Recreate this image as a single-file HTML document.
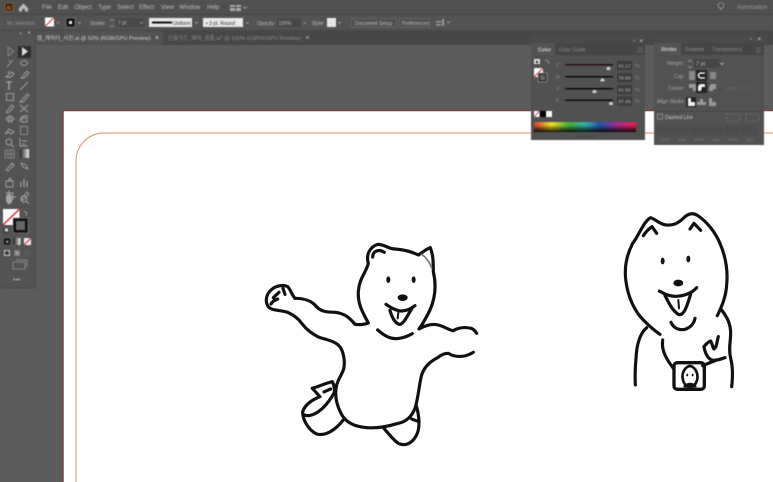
<!DOCTYPE html>
<html><head><meta charset="utf-8"><style>
html,body{margin:0;padding:0;background:#5c5c5c;width:773px;height:482px;overflow:hidden}
svg{display:block;position:absolute;left:0;top:0}
text{font-family:"Liberation Sans","Noto Sans CJK KR",sans-serif;font-size:6px;fill:#bdbdbd}
.ui{filter:blur(.45px)}
.d{fill:#999}
.f{fill:#8a8a8a;font-size:5px}
.art{filter:blur(.25px)}
.art path,.art ellipse{stroke-linecap:round;stroke-linejoin:round}
</style></head><body>
<svg width="773" height="482" viewBox="0 0 773 482" xmlns="http://www.w3.org/2000/svg">
<rect width="773" height="482" fill="#5c5c5c"/>
<!-- artboard -->
<rect x="63" y="110.5" width="720" height="380" fill="#fff" stroke="#7a4444" stroke-width="1.5"/>
<path d="M773 133H104a28 28 0 0 0-28 28V482" fill="none" stroke="#d98f6b" stroke-width="1"/>
<!-- bear 1 -->
<g class="art" transform="translate(255 235) scale(.3333)" fill="none" stroke="#111" stroke-width="9.500">
<path d="M120 190C140 190 165 195 180 210C195 230 215 232 240 232C270 235 285 250 300 268C315 270 330 268 340 264C325 235 308 210 310 170C312 130 335 110 340 85C332 60 345 35 368 28C390 28 400 42 420 42C450 44 470 50 490 60C505 50 515 42 526 38C535 60 535 85 535 110C542 140 545 180 525 225C515 245 505 265 492 282C510 272 530 265 550 270C570 275 580 285 595 287"/>
<path d="M595 287C610 278 630 276 648 280C658 283 662 290 665 295"/>
<path d="M120 190C110 180 108 165 98 155C85 148 62 152 48 165C34 178 30 198 38 212C45 228 75 224 98 232C115 240 130 250 140 265C155 285 170 295 190 306C215 315 245 318 258 340C268 360 270 385 266 402C260 420 250 432 245 450C238 480 245 510 258 535C270 560 295 575 335 578C370 580 395 575 430 565C455 560 470 545 480 520C490 490 492 450 500 420C510 390 530 378 548 368C560 358 570 355 580 355C600 368 630 368 655 352"/>
<path d="M385 578C400 595 415 615 430 625C450 635 470 625 482 605C495 585 495 555 485 515"/>
<path d="M470 552C478 555 485 558 492 560"/>
<path d="M172 460C190 455 210 445 232 440C240 455 240 470 235 478C222 500 205 520 190 530C175 540 160 545 148 540"/>
<path d="M172 460L195 485C170 495 150 510 143 530C143 555 160 585 185 597C215 605 245 580 265 555"/>
<path d="M207 471L227 462"/>
<path d="M55 188L72 172M48 207C52 200 60 195 68 192M84 160L90 178"/>
<path d="M353 66C353 50 370 40 388 52"/>
<path d="M500 58C512 66 522 78 530 98" stroke="#777" stroke-width="5"/>
<path d="M393 208C410 220 425 228 440 228C455 228 470 220 480 212"/>
<path d="M405 226C410 245 418 262 432 268C445 270 455 245 470 222"/>
<path d="M430 233L428 250" stroke-width="6"/>
<path d="M368 285C385 300 405 312 425 311C445 310 460 303 472 296"/>
<ellipse cx="400" cy="134" rx="6" ry="10" fill="#111" stroke="none"/>
<ellipse cx="476" cy="134" rx="6" ry="10" fill="#111" stroke="none"/>
<ellipse cx="443" cy="188" rx="15" ry="10" fill="#111" stroke="none"/>
</g>
<!-- bear 2 -->
<g class="art" transform="translate(610 205) scale(.3333)" fill="none" stroke="#111" stroke-width="9.500">
<path d="M150 388C130 375 115 360 100 345C75 320 55 280 48 230C42 190 50 150 68 115C85 95 100 50 122 38C140 45 150 58 168 60C190 62 205 55 222 38C235 25 250 22 265 33C290 50 315 80 330 115C345 150 355 190 350 240C348 275 335 305 322 332"/>
<path d="M335 315C350 335 362 355 362 385C362 410 355 430 362 460C370 490 368 520 365 545"/>
<path d="M110 368C90 385 80 420 78 460C75 490 75 515 76 540"/>
<path d="M100 92C108 80 118 70 126 65L140 85"/>
<path d="M240 72L252 55L272 76"/>
<path d="M148 258C165 268 180 275 200 274C225 272 245 265 260 248"/>
<path d="M165 272C175 290 185 315 205 328C222 335 232 300 242 268"/>
<path d="M205 285L207 310" stroke-width="6"/>
<path d="M183 352C190 370 210 378 228 372C245 365 252 355 255 340"/>
<path d="M158 405C155 430 160 450 190 490"/>
<path d="M278 482L320 465"/>
<path d="M282 425C290 415 295 410 302 408C308 418 308 430 312 432C322 425 320 410 325 395"/>
<path d="M282 425C285 445 295 465 310 466C325 466 335 462 345 458"/>
<rect x="192" y="473" width="91" height="80" rx="10" stroke-width="10"/>
<path d="M218 520C215 500 228 485 240 483C252 485 265 500 262 522C258 540 250 545 240 545C228 545 220 535 218 520Z" stroke-width="8"/>
<path d="M222 545C230 532 250 532 258 545Z" fill="#111" stroke-width="4"/>
<ellipse cx="232" cy="510" rx="3" ry="4" fill="#111" stroke="none"/><ellipse cx="248" cy="510" rx="3" ry="4" fill="#111" stroke="none"/>
<ellipse cx="158" cy="168" rx="6" ry="10" fill="#111" stroke="none"/>
<ellipse cx="235" cy="162" rx="6" ry="10" fill="#111" stroke="none"/>
<ellipse cx="205" cy="234" rx="15" ry="10" fill="#111" stroke="none"/>
</g>
<g class="ui">
<!-- top bars -->
<rect width="773" height="14.5" fill="#505050"/>
<rect y="14.5" width="773" height="16" fill="#535353"/>
<rect y="14" width="773" height=".7" fill="#404040"/>
<rect y="30" width="773" height="15" fill="#474747"/>
<rect x="0" y="31" width="163" height="14" fill="#525252"/>
<rect x="5" y="3" width="8" height="8" fill="#3a2412" stroke="#a8622a" stroke-width=".7"/>
<text x="6.500" y="9.500" style="font-size:5px;fill:#e08a30">Ai</text>
<path d="M19 8L23.500 3.500L28 8V11.500H25V9H22V11.500H19Z" fill="#bbb"/>
<text x="42" y="9">File</text><text x="58" y="9">Edit</text><text x="74.500" y="9">Object</text>
<text x="98" y="9">Type</text><text x="117" y="9">Select</text><text x="139" y="9">Effect</text>
<text x="161" y="9">View</text><text x="179" y="9">Window</text><text x="207" y="9">Help</text>
<path d="M230 5h5v2h-5zM236 5h5v2h-5zM230 8h5v3h-5zM236 8h5v3h-5z" fill="#aaa"/>
<path d="M243 6.500l2 2 2-2" fill="none" stroke="#aaa" stroke-width=".7"/>
<circle cx="721" cy="5.500" r="2.800" fill="none" stroke="#aaa" stroke-width=".7"/><path d="M720 9.500h2" stroke="#aaa" stroke-width=".8"/>
<text x="737" y="9" class="d">Automation</text>
<!-- options bar -->
<text x="7" y="25" class="d" style="font-size:5px">No Selection</text>
<rect x="45" y="17.500" width="9" height="9" fill="#fff"/><path d="M45 26.500L54 17.500" stroke="#d22" stroke-width="1"/>
<path d="M56.500 22l1.500 1.500 1.500-1.500M78 22l1.500 1.500 1.500-1.500" stroke="#aaa" stroke-width=".7" fill="none"/>
<rect x="66" y="18" width="9" height="9" fill="#111" stroke="#999" stroke-width=".5"/><rect x="69" y="21" width="3" height="3" fill="#eee"/>
<text x="90" y="25" style="font-size:5px">Stroke:</text>
<path d="M110 21l2-2 2 2M110 25l2 2 2-2" stroke="#aaa" stroke-width=".6" fill="none"/>
<rect x="116" y="18" width="28" height="9" fill="#484848"/><text x="118" y="24.500" style="font-size:5px">7 pt</text>
<path d="M140 22l1.500 1.500 1.500-1.500M195 22l1.500 1.500 1.500-1.500M246 22l1.500 1.500 1.500-1.500" stroke="#aaa" stroke-width=".7" fill="none"/>
<rect x="149" y="18" width="43" height="9" fill="#e8e8e8"/><rect x="152" y="21.500" width="20" height="2" fill="#111"/><text x="173" y="25" style="font-size:5px;fill:#333">Uniform</text>
<rect x="203" y="18" width="40" height="9" fill="#e8e8e8"/><text x="206" y="25" style="font-size:5px;fill:#333">•  3 pt. Round</text>
<text x="257" y="25" style="font-size:5px">Opacity:</text>
<rect x="277" y="18" width="24" height="9" fill="#484848"/><text x="278.500" y="25" style="font-size:5px">100%</text>
<text x="303" y="25" style="font-size:5px">&gt;</text>
<text x="312" y="25" style="font-size:5px">Style:</text>
<rect x="327" y="18" width="9" height="9" fill="#e6e6e6"/>
<path d="M338 22l1.500 1.500 1.500-1.500" stroke="#aaa" stroke-width=".7" fill="none"/>
<rect x="351.500" y="18.500" width="45" height="8.500" fill="#505050" stroke="#777" stroke-width=".5"/><text x="355" y="25" style="font-size:5px">Document Setup</text>
<rect x="399.500" y="18.500" width="30" height="8.500" fill="#505050" stroke="#777" stroke-width=".5"/><text x="402" y="25" style="font-size:5px">Preferences</text>
<path d="M436 21h5v1.500h-5zM436 24h5v1.500h-5zM442 19h2v7h-2z" fill="#999"/>
<path d="M447 21.500l1.500 1.500 1.500-1.500" stroke="#aaa" stroke-width=".7" fill="none"/>
<!-- tabs -->
<text x="35" y="40" style="font-size:5.500px;fill:#d0d0d0">-캠_캐릭터_사진.ai @ 50% (RGB/GPU Preview)</text>
<path d="M155.500 36l3 3m0-3l-3 3" stroke="#ccc" stroke-width=".7"/>
<text x="168" y="40" style="font-size:5.500px;fill:#8c8c8c">인물카드_제작_원품.ai* @ 100% (CMYK/GPU Preview)</text>
<path d="M306 36l3 3m0-3l-3 3" stroke="#aaa" stroke-width=".7"/>
<!-- toolbar -->
<rect x="0" y="36" width="35.500" height="251.500" fill="#535353"/>
<rect x="35" y="36" width=".7" height="252" fill="#444"/><rect y="287.500" width="36" height=".7" fill="#444"/>
<text x="19" y="35" style="font-size:5px">«</text><path d="M28 31.500l2 2m0-2l-2 2" stroke="#bbb" stroke-width=".6"/>
<rect x="18" y="46" width="13" height="12" fill="#2f2f2f"/>
<path d="M8 47v9l5.500-4.500Z" fill="none" stroke="#999" stroke-width=".7"/><path d="M22 47v9l6-4.500Z" fill="#ddd"/>
<g fill="none" stroke="#a6a6a6" stroke-width=".9">
<path d="M7 67l6-7M9 60l1 2"/><ellipse cx="24" cy="63" rx="3.500" ry="2.500"/>
<path d="M6 77l6-5 2 2-3 3zM8 73l2-2"/><path d="M21 78l6-7 2 2-5 5z"/>
<path d="M6 82h6M9 82v7M8 89h2" stroke-width="1.300"/><path d="M20 90l8-8"/>
<rect x="6.500" y="93.500" width="7" height="7"/><path d="M20 102l7-8 2 1-6 7z"/>
<path d="M6 112l6-7 2 2-6 6z"/><path d="M20 105l8 7M20 112l8-7"/>
<path d="M9 116l-3 3 3 3zM11 116l3 3-3 3z"/><rect x="22" y="118" width="5" height="4"/><path d="M20 122v-3l3-3h5"/>
<path d="M5 134l4-5 5 3-3 2-2-2z"/><rect x="20.500" y="126.500" width="7" height="8" stroke-width=".7"/>
<circle cx="9" cy="142" r="3"/><path d="M11.500 145l2 2"/><path d="M20 138v8h8M22 141h5M22 144h3"/>
<path d="M5 150h9v8h-9zM8 150v8M11 150v8M5 154h9" stroke-width=".6"/>
<path d="M6 170l6-7 2 2-6 6z"/><path d="M21 163l5 2 2 4-5-2z"/>
<path d="M6 181h7v6h-7zM8 181l2-3 2 3"/><path d="M21 187v-5M24 187v-8M27 187v-6" stroke-width="1.200"/>
<path d="M6 193h7v7M9 190v7h7"/><path d="M21 204l6-7 2 2-6 6z" transform="translate(0 -5)"/>
<circle cx="24" cy="198" r="3" transform="translate(0 1)"/><path d="M26 201l3 3"/>
</g>
<rect x="20" y="149" width="9" height="9" fill="url(#g)"/>
<path d="M6 204v-4a3 3 0 0 1 6 0v5l-2 2H8z" fill="#a6a6a6" transform="translate(0 -3)"/>
<rect x="3" y="209" width="16.500" height="16" fill="#fff"/><path d="M3 225L19.500 209" stroke="#d5283c" stroke-width="1.500"/>
<path d="M24 211l3 2-1 3" fill="none" stroke="#aaa" stroke-width=".8"/>
<rect x="3" y="228" width="6" height="6" fill="#444"/><rect x="5" y="228.500" width="3" height="3" fill="#ddd"/>
<rect x="13" y="218" width="15" height="15" fill="#111" stroke="#999" stroke-width=".5"/><rect x="16" y="221" width="9" height="9" fill="#666"/>
<rect x="3.500" y="238" width="7" height="7" fill="#111" stroke="#777" stroke-width=".5"/><rect x="6" y="240.500" width="2.500" height="2.500" fill="#888"/>
<rect x="13.500" y="238" width="7" height="7" fill="url(#g)"/>
<rect x="24" y="238" width="7" height="7" fill="#eee"/><path d="M24 245l7-7" stroke="#d5283c" stroke-width="1.200"/>
<rect x="4" y="250" width="6" height="6" fill="#bbb"/><circle cx="7" cy="253" r="2" fill="#333"/>
<rect x="14" y="250" width="6" height="6" fill="#777"/><circle cx="17" cy="253" r="2" fill="#999"/>
<rect x="24" y="250" width="6" height="6" fill="#5a5a5a"/>
<path d="M13 262h12v7H13z" fill="none" stroke="#999" stroke-width=".8"/><path d="M16 260h11v7" fill="none" stroke="#999" stroke-width=".8"/>
<text x="13" y="282" style="font-size:7px;font-weight:bold;fill:#aaa">•••</text>

<!-- color panel -->
<rect x="531" y="36" width="114" height="104" fill="#515151"/>
<rect x="531" y="36" width="114" height="8" fill="#4a4a4a"/>
<rect x="531" y="43" width="114" height="12" fill="#454545"/>
<rect x="531" y="43" width="24" height="12" fill="#545454"/>
<text x="633" y="42" style="font-size:4.500px">«</text><path d="M640 39.500l2.500 2.500m0-2.500l-2.500 2.500" stroke="#bbb" stroke-width=".6"/>
<text x="538" y="51.500" style="font-size:5px;font-weight:bold;fill:#ccc">Color</text>
<text x="559" y="51.500" class="f" style="fill:#8c8c8c">Color Guide</text>
<path d="M637 48h6M637 50h6M637 52h6" stroke="#888" stroke-width=".6"/>
<rect x="534" y="59" width="6" height="5" fill="#ddd"/><rect x="536" y="61" width="2" height="2" fill="#222"/>
<path d="M545 60l3 1 1 3" stroke="#aaa" stroke-width=".7" fill="none"/>
<rect x="534" y="68" width="9" height="9" fill="#fff"/><path d="M534 77l9-9" stroke="#d5283c" stroke-width="1.100"/>
<rect x="538" y="73" width="9" height="9" fill="#333" stroke="#aaa" stroke-width=".6"/><rect x="540" y="75" width="5" height="5" fill="#666"/>
<text x="556" y="67" class="f">C</text><text x="555.500" y="79" class="f">M</text><text x="556" y="91" class="f">Y</text><text x="556" y="102" class="f">K</text>
<rect x="565" y="64" width="48" height="1.500" fill="#2c0f0f"/><rect x="565" y="76" width="48" height="1.500" fill="#0c0c0c"/>
<rect x="565" y="88" width="48" height="1.500" fill="#0c0c06"/><rect x="565" y="99.500" width="48" height="1.500" fill="#0c0c0c"/>
<path d="M606.500 70v-2l2-1.500 2 1.500v2zM600.500 81.500v-2l2-1.500 2 1.500v2zM592.500 93v-2l2-1.500 2 1.500v2zM609 105v-2l2-1.500 2 1.500v2z" fill="#ccc"/>
<rect x="617" y="61" width="15" height="9" fill="#3c3c3c"/><rect x="617" y="73" width="15" height="9" fill="#3c3c3c"/><rect x="617" y="85" width="15" height="9" fill="#3c3c3c"/><rect x="617" y="96.500" width="15" height="9" fill="#3c3c3c"/>
<text x="618.500" y="67.500" style="font-size:4.800px">91.17</text><text x="618.500" y="79.500" style="font-size:4.800px">78.69</text><text x="618.500" y="91.500" style="font-size:4.800px">61.95</text><text x="618.500" y="103" style="font-size:4.800px">97.45</text>
<text x="635" y="67.500" class="f">%</text><text x="635" y="79.500" class="f">%</text><text x="635" y="91.500" class="f">%</text><text x="635" y="103" class="f">%</text>
<rect x="534" y="111" width="5.500" height="6" fill="#fff"/><path d="M534 117l5.500-6" stroke="#d5283c" stroke-width=".9"/>
<rect x="540" y="111" width="6" height="6" fill="#000"/><rect x="546" y="111" width="6" height="6" fill="#fff"/>
<rect x="534" y="122" width="102" height="10" fill="url(#spec)"/>
<rect x="534" y="125" width="102" height="7" fill="url(#dk)"/>
<rect x="577" y="136" width="18" height="1" fill="#444"/>

<!-- stroke panel -->
<rect x="654" y="36" width="110" height="109" fill="#525252"/>
<rect x="654" y="36" width="110" height="7" fill="#4a4a4a"/>
<rect x="654" y="43" width="110" height="12" fill="#454545"/>
<rect x="654" y="43" width="27" height="12" fill="#545454"/>
<text x="750" y="40" style="font-size:4.500px">«</text><path d="M758 37.500l2.500 2.500m0-2.500l-2.500 2.500" stroke="#bbb" stroke-width=".6"/>
<text x="661" y="51" style="font-size:5px;font-weight:bold;fill:#ccc">Stroke</text>
<text x="685" y="51" class="f" style="fill:#8c8c8c">Gradient</text><text x="712" y="51" class="f" style="fill:#8c8c8c">Transparency</text>
<path d="M756 48h5M756 50h5M756 52h5" stroke="#888" stroke-width=".6"/>
<text x="667" y="65" class="f" style="fill:#aaa">Weight:</text>
<path d="M688 62l2-2 2 2M688 66l2 2 2-2" stroke="#aaa" stroke-width=".6" fill="none"/>
<rect x="694" y="59" width="26" height="9" fill="#454545"/><text x="696" y="65.500" style="font-size:5.500px">7 pt</text>
<path d="M720 62.500l2 2 2-2" stroke="#bbb" stroke-width=".8" fill="none"/>
<text x="674" y="78" class="f" style="fill:#aaa">Cap:</text>
<rect x="689" y="71" width="6" height="9" fill="#888"/>
<rect x="696" y="70" width="11" height="11" fill="#222"/><path d="M705 73h-4a2.500 2.500 0 0 0 0 5h4" fill="none" stroke="#eee" stroke-width="1.500"/>
<rect x="710" y="72" width="6" height="7" fill="#888"/>
<text x="668" y="90" class="f" style="fill:#aaa">Corner:</text>
<path d="M689 84h7v7h-3v-3h-4z" fill="#999"/>
<rect x="696" y="82" width="11" height="11" fill="#222"/><path d="M698 91v-4a3 3 0 0 1 3-3h4v3h-3l-1 4z" fill="#eee"/>
<path d="M709 90v-3l2-3h5v5h-3v2h-4z" fill="#999"/>
<text x="726" y="90" class="f" style="fill:#6c6c6c">Limit:</text>
<rect x="739" y="84" width="14" height="8" fill="#555"/>
<text x="657" y="103" class="f" style="fill:#aaa">Align Stroke:</text>
<rect x="686" y="97" width="10" height="10" fill="#222"/><path d="M688 98h3v4h4v4h-7z" fill="#eee"/>
<path d="M700 99h3v3h3v3h-9v-3h3z" fill="#999"/><path d="M709 98h3v4h4v4h-7z" fill="#999"/>
<rect x="654" y="111" width="110" height=".6" fill="#444"/>
<rect x="657.500" y="114" width="5" height="5" fill="none" stroke="#aaa" stroke-width=".6"/>
<text x="665" y="119" class="f" style="fill:#ccc">Dashed Line</text>
<rect x="727" y="114" width="13" height="7" fill="none" stroke="#808080" stroke-width=".6" stroke-dasharray="2 1.500"/>
<rect x="746" y="114" width="13" height="7" fill="none" stroke="#808080" stroke-width=".6" stroke-dasharray="2 1.500"/>
<g fill="#4d4d4d"><rect x="656" y="125" width="16" height="10"/><rect x="673" y="125" width="16" height="10"/><rect x="690" y="125" width="16" height="10"/><rect x="707" y="125" width="16" height="10"/><rect x="724" y="125" width="16" height="10"/><rect x="741" y="125" width="16" height="10"/></g>
<text x="660" y="141" style="font-size:4.500px;fill:#757575">dash</text><text x="678" y="141" style="font-size:4.500px;fill:#757575">gap</text><text x="694" y="141" style="font-size:4.500px;fill:#757575">dash</text><text x="712" y="141" style="font-size:4.500px;fill:#757575">gap</text><text x="728" y="141" style="font-size:4.500px;fill:#757575">dash</text><text x="746" y="141" style="font-size:4.500px;fill:#757575">gap</text>
</g>
<defs>
<linearGradient id="g"><stop offset="0" stop-color="#222"/><stop offset="1" stop-color="#eee"/></linearGradient>
<linearGradient id="spec"><stop offset="0" stop-color="#d63a3a"/><stop offset=".17" stop-color="#e8e020"/><stop offset=".35" stop-color="#40b040"/><stop offset=".5" stop-color="#30b0b0"/><stop offset=".65" stop-color="#2850b0"/><stop offset=".82" stop-color="#b02890"/><stop offset="1" stop-color="#e02050"/></linearGradient>
<linearGradient id="dk" x1="0" y1="0" x2="0" y2="1"><stop offset="0" stop-color="#000" stop-opacity="0"/><stop offset="1" stop-color="#000" stop-opacity=".9"/></linearGradient>
</defs>
</svg>
</body></html>
